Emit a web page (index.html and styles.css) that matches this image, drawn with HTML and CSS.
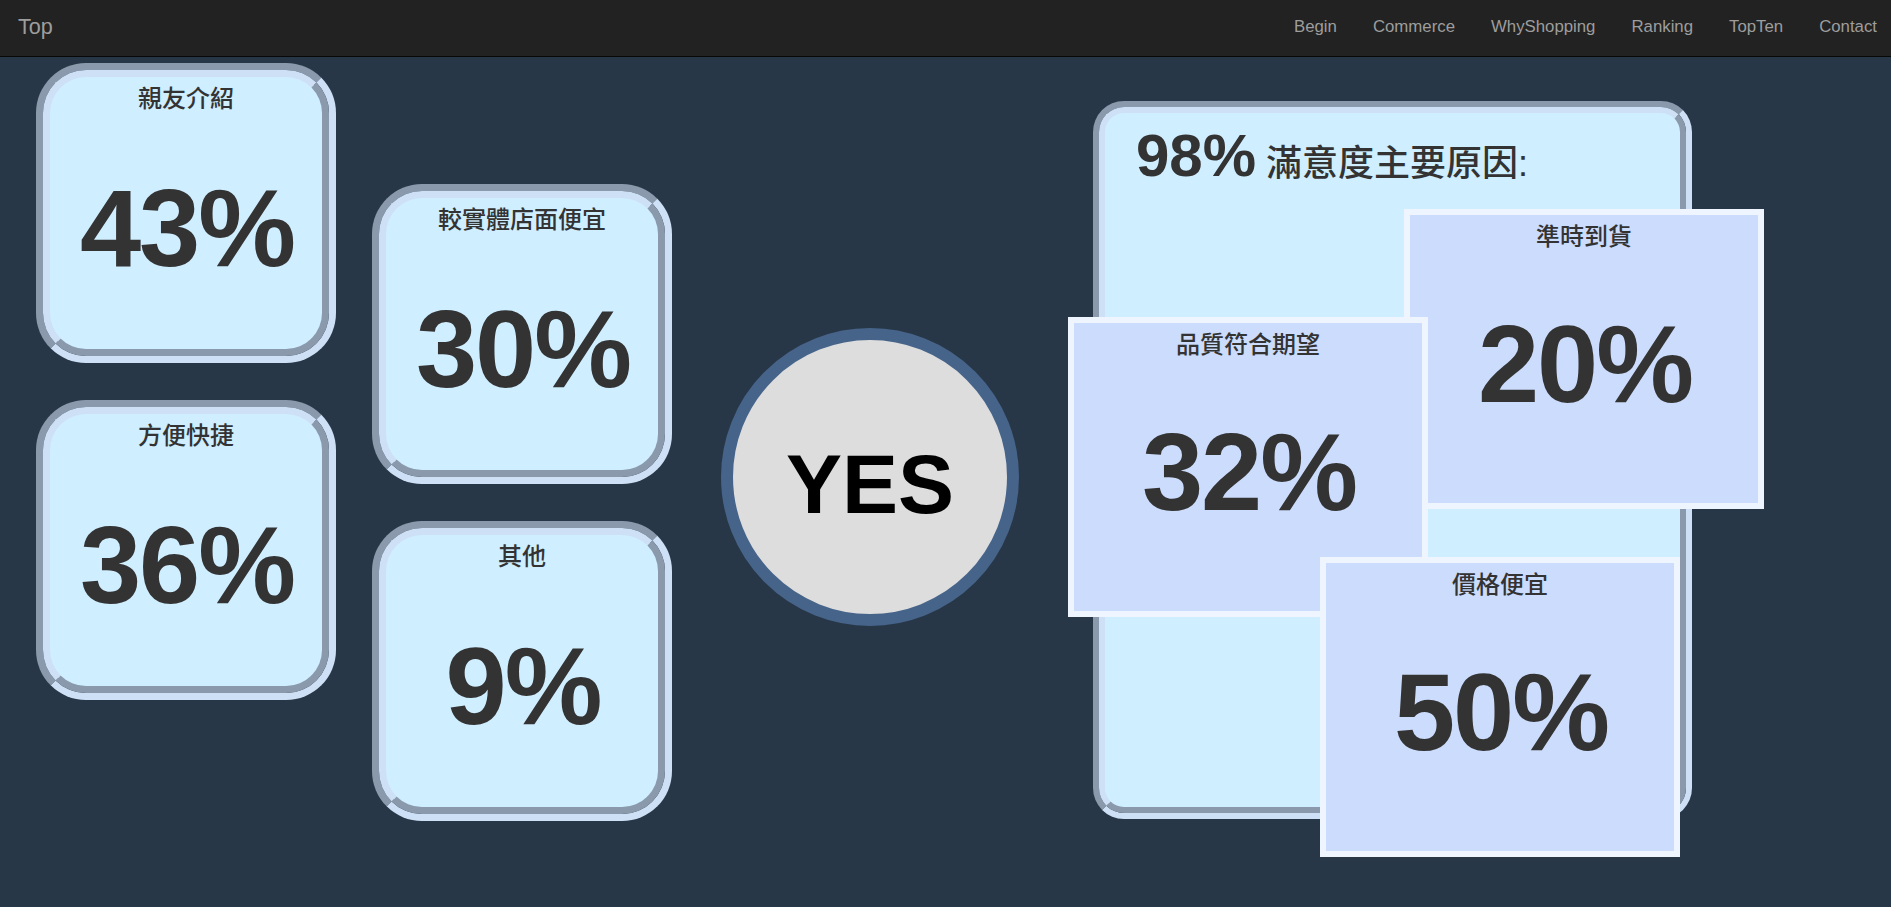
FILE: index.html
```html
<!DOCTYPE html>
<html lang="zh-Hant">
<head>
<meta charset="utf-8">
<title>Top</title>
<link rel="stylesheet" href="styles.css">
</head>
<body>
<nav class="navbar">
  <a class="brand" href="#">Top</a>
  <ul class="nav">
    <li><a href="#">Begin</a></li>
    <li><a href="#">Commerce</a></li>
    <li><a href="#">WhyShopping</a></li>
    <li><a href="#">Ranking</a></li>
    <li><a href="#">TopTen</a></li>
    <li><a href="#">Contact</a></li>
  </ul>
</nav>
<main class="stage">
  <div class="col col-a">
    <div class="card"><div class="card-in"><h3 class="label">親友介紹</h3><div class="pct">43%</div></div></div>
    <div class="card"><div class="card-in"><h3 class="label">方便快捷</h3><div class="pct">36%</div></div></div>
  </div>
  <div class="col col-b">
    <div class="card"><div class="card-in"><h3 class="label">較實體店面便宜</h3><div class="pct">30%</div></div></div>
    <div class="card"><div class="card-in"><h3 class="label">其他</h3><div class="pct">9%</div></div></div>
  </div>
  <div class="yes"><span class="yes-text">YES</span></div>
  <section class="panel">
    <div class="panel-in">
      <h1 class="panel-title"><span class="big">98%</span> 滿意度主要原因:</h1>
      <div class="reason r-time"><h3 class="label">準時到貨</h3><div class="pct pct-r">20%</div></div>
      <div class="reason r-quality"><h3 class="label">品質符合期望</h3><div class="pct pct-r">32%</div></div>
      <div class="reason r-price"><h3 class="label">價格便宜</h3><div class="pct pct-r">50%</div></div>
    </div>
  </section>
</main>
</body>
</html>
```
FILE: styles.css
```css
* { box-sizing: border-box; }
html, body { margin: 0; padding: 0; }
body {
  min-height: 100vh;
  background: #283747;
  color: #333;
  font-family: "Liberation Sans", Arial, "Noto Sans CJK TC", sans-serif;
}

/* navbar */
.navbar {
  display: flex;
  align-items: center;
  height: 57px;
  background: #222;
  border-bottom: 1px solid #080808;
}
.brand {
  padding-left: 18px;
  margin-top: -3px;
  font-size: 21.6px;
  color: #9d9d9d;
  text-decoration: none;
}
.nav {
  display: flex;
  margin: -3px 0 0 auto;
  padding: 0;
  list-style: none;
}
.nav a {
  display: block;
  padding: 0 18px;
  font-size: 16.8px;
  color: #9d9d9d;
  text-decoration: none;
}
.nav li:last-child a { padding-right: 14px; }

/* stage */
.stage {
  display: flex;
  align-items: flex-start;
  padding-left: 36px;
}
.col {
  display: flex;
  flex-direction: column;
  gap: 37px;
  width: 300px;
}
.col-a { margin-top: 6px; }
.col-b { margin-top: 127px; margin-left: 36px; }

/* rounded cards with two-tone double ring */
.card {
  width: 300px;
  height: 300px;
  border: 7px solid;
  border-color: #8a9aac #cde0f5 #cde0f5 #8a9aac;
  border-radius: 50px;
}
.card-in {
  display: flex;
  flex-direction: column;
  align-items: center;
  height: 100%;
  border: 7px solid;
  border-color: #cde0f5 #8a9aac #8a9aac #cde0f5;
  border-radius: 43px;
  background: #cfeeff;
}
.label {
  margin: 8px 0 0;
  font-size: 24px;
  line-height: 1;
  font-weight: 500;
  font-family: "Noto Sans CJK TC", "Liberation Sans", sans-serif;
  color: #333;
  white-space: nowrap;
}
.pct {
  margin-top: 64px;
  padding-left: 2px;
  font-family: "Liberation Sans", Arial, sans-serif;
  font-size: 110px;
  line-height: 1;
  font-weight: 700;
  letter-spacing: -2px;
  color: #333;
}
.pct-r { margin-top: 62px; }

/* YES circle */
.yes {
  display: flex;
  align-items: center;
  justify-content: center;
  width: 298px;
  height: 298px;
  margin: 271px 0 0 49px;
  padding-top: 14px;
  border: 12px solid #46648a;
  border-radius: 50%;
  background: #dddddd;
}
.yes-text {
  font-size: 84px;
  line-height: 1;
  font-weight: 700;
  color: #000;
}

/* reasons panel */
.panel {
  width: 599px;
  height: 718px;
  margin: 44px 0 0 74px;
  border: 6px solid;
  border-color: #8a9aac #cde0f5 #cde0f5 #8a9aac;
  border-radius: 31px;
}
.panel-in {
  position: relative;
  height: 100%;
  border: 6px solid;
  border-color: #cde0f5 #8a9aac #8a9aac #cde0f5;
  border-radius: 25px;
  background: #cfeeff;
}
.panel-title {
  margin: 0;
  padding: 13px 0 0 31px;
  font-size: 36px;
  line-height: 60px;
  font-weight: 500;
  color: #333;
  font-family: "Liberation Sans", Arial, "Noto Sans CJK TC", sans-serif;
}
.panel-title .big {
  font-size: 60px;
  font-weight: 700;
}
.reason {
  position: absolute;
  display: flex;
  flex-direction: column;
  align-items: center;
  width: 360px;
  height: 300px;
  border: 6px solid #eef5fe;
  background: #ccdcfc;
}
.r-time { left: 299px; top: 96px; }
.r-quality { left: -37px; top: 204px; }
.r-price { left: 215px; top: 444px; }
```
